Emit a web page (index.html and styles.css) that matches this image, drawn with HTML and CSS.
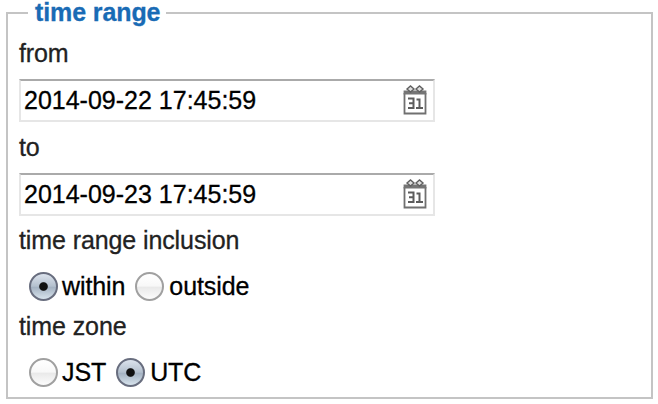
FILE: index.html
```
<!DOCTYPE html>
<html lang="en">
<head>
<meta charset="utf-8">
<title>time range</title>
<link rel="stylesheet" href="styles.css">
</head>
<body>
<svg class="defs" aria-hidden="true">
  <symbol id="calendar" viewBox="0 0 24 30">
    <path d="M1.500 8V28.500H22.500V8" fill="#fff" stroke="#707070" stroke-width="1.800"/>
    <path d="M.6 5.500H23.400V9.500H.6Z" fill="#757575"/>
    <path d="M4 4l3.500-3 3.500 3-3.500 3zM13 4l3.500-3 3.500 3-3.500 3z" fill="#ddd" stroke="#606060" stroke-width="1.400"/>
    <path d="M5 13.500h5.500v9.500H5M6 18.200h4.500M13.500 14.500h3V23M13 23h7" fill="none" stroke="#5c5c5c" stroke-width="2"/>
  </symbol>
</svg>
<form class="panel">
  <div class="heading"><span class="title">time range</span></div>
  <div class="label">from</div>
  <div class="field"><span>2014-09-22 17:45:59</span><svg class="icon"><use href="#calendar"/></svg></div>
  <div class="label">to</div>
  <div class="field"><span>2014-09-23 17:45:59</span><svg class="icon"><use href="#calendar"/></svg></div>
  <div class="label inclusion">time range inclusion</div>
  <div class="options">
    <label class="option"><span class="radio checked"></span>within</label>
    <label class="option outside"><span class="radio"></span>outside</label>
  </div>
  <div class="label zone">time zone</div>
  <div class="options">
    <label class="option"><span class="radio"></span>JST</label>
    <label class="option utc"><span class="radio checked"></span>UTC</label>
  </div>
</form>
</body>
</html>
```
FILE: styles.css
```
* { box-sizing: border-box; }
body {
  margin: 0;
  padding-top: 12px;
  background: #fff;
  font: 25px/26px "Liberation Sans", Arial, sans-serif;
  color: #222;
  -webkit-text-stroke: 0.3px;
}
.defs { display: none; }
.panel {
  width: 647px;
  height: 387px;
  margin: 0 0 0 6px;
  padding: 0 11px;
  border: 2px solid #c4c4c4;
}
.heading { display: flex; height: 26px; margin-left: 9px; }
.title {
  width: 138px;
  height: 28px;
  margin-top: -14px;
  padding-left: 7px;
  background: #fff;
  color: #196bb5;
  font-weight: bold;
  line-height: 24px;
  letter-spacing: -0.1px;
  white-space: nowrap;
}
.label { height: 26px; letter-spacing: -0.1px; white-space: nowrap; }
.field {
  display: flex;
  justify-content: space-between;
  width: 416px;
  height: 43px;
  margin: 13px 0 12px;
  padding: 7px 6px 0 3px;
  border: 2px solid #e6e6e6;
  border-top-color: #aaa;
  color: #000;
}
.field span { margin-top: -1px; }
.icon { width: 24px; height: 30px; margin-top: -3px; }
.inclusion { margin-top: -1px; }
.options {
  display: flex;
  height: 30px;
  margin: 18px 0 0 10px;
  color: #000;
}
.option { display: flex; align-items: center; height: 30px; letter-spacing: -0.1px; }
.radio {
  width: 29px;
  height: 29px;
  margin-right: 4px;
  border: 2px solid #a0a0a0;
  border-radius: 50%;
  background: linear-gradient(#fff 0%, #f8f8f8 48%, #e9e9e9 53%, #fcfcfc 100%);
}
.radio.checked {
  border-color: #686d7e;
  background: radial-gradient(circle, #111 0 3.800px, transparent 4.800px), linear-gradient(#dce3ed 0%, #b5c1cf 48%, #a5b3c3 54%, #d7e3ec 100%);
}
.outside { margin-left: 10px; }
.outside .radio { margin-right: 5px; }
.utc { margin-left: 10px; }
.utc .radio { margin-right: 5px; }
.zone { margin-top: 12px; }
```
